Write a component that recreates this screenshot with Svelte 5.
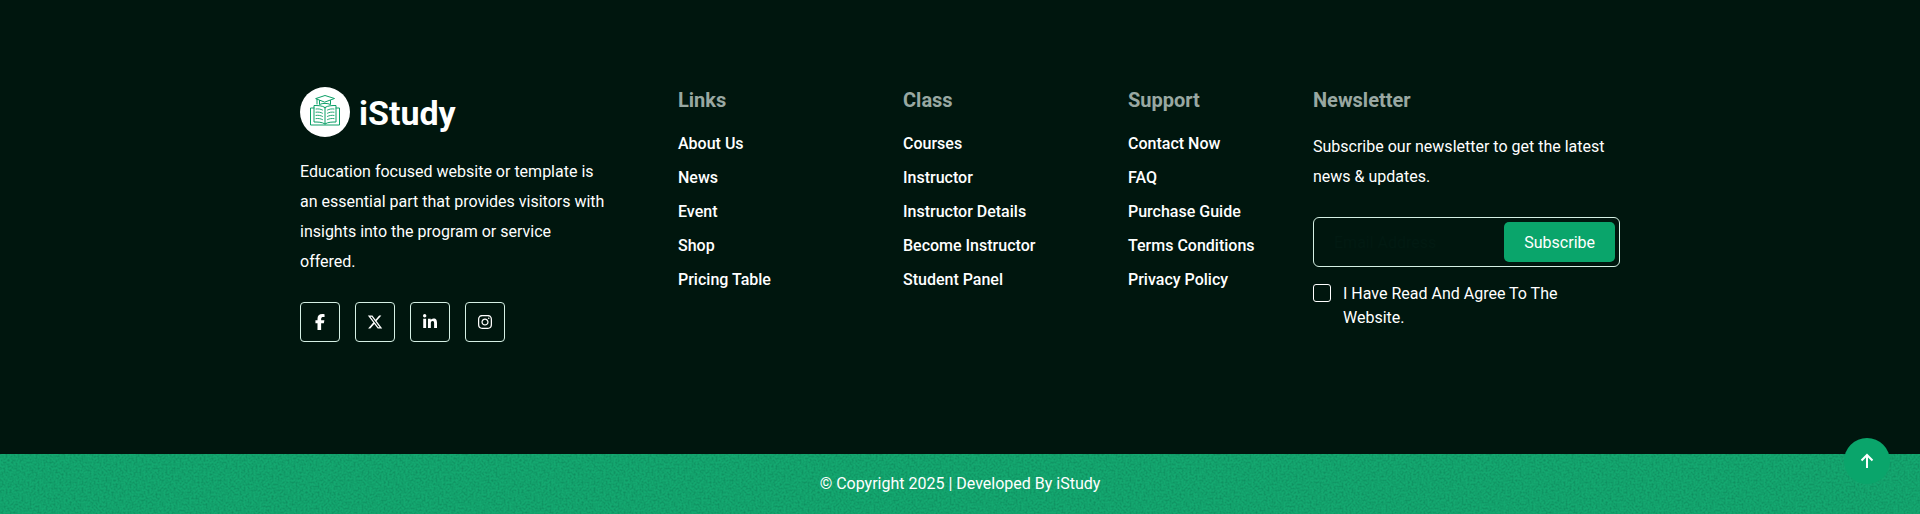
<script>
  const columns = [
    { title: 'Links', items: ['About Us', 'News', 'Event', 'Shop', 'Pricing Table'] },
    { title: 'Class', items: ['Courses', 'Instructor', 'Instructor Details', 'Become Instructor', 'Student Panel'] },
    { title: 'Support', items: ['Contact Now', 'FAQ', 'Purchase Guide', 'Terms Conditions', 'Privacy Policy'] }
  ];

  const socials = [
    {
      name: 'Facebook',
      box: '0 0 320 512',
      path: 'M80 299.3V512H196V299.3h86.500l18-97.800H196V166.900c0-51.700 20.300-71.500 72.700-71.500c16.300 0 29.400 .4 37 1.200V7.900C291.400 4 256.400 0 236.200 0C129.300 0 80 50.500 80 159.400v42.100H14v97.800H80z'
    },
    {
      name: 'X',
      box: '0 0 512 512',
      path: 'M389.200 48h70.600L305.600 224.200 487 464H345L233.700 318.600 106.500 464H35.800L200.700 275.500 26.800 48H172.400L272.900 180.900 389.200 48zM364.400 421.800h39.100L151.100 88h-42L364.400 421.800z'
    },
    {
      name: 'LinkedIn',
      box: '0 0 448 512',
      path: 'M100.300 448H7.400V148.900h92.900zM53.800 108.100C24.100 108.100 0 83.500 0 53.800a53.800 53.800 0 0 1 107.600 0c0 29.700-24.100 54.300-53.800 54.300zM447.900 448h-92.700V302.400c0-34.700-.7-79.200-48.300-79.200-48.300 0-55.700 37.700-55.700 76.700V448h-92.800V148.900h89.100v40.800h1.300c12.400-23.500 42.700-48.300 87.900-48.300 94 0 111.300 61.900 111.300 142.300V448z'
    },
    {
      name: 'Instagram',
      box: '0 0 448 512',
      path: 'M224.100 141c-63.600 0-114.900 51.300-114.900 114.900s51.300 114.900 114.900 114.900S339 319.500 339 255.900 287.700 141 224.100 141zm0 189.600c-41.100 0-74.700-33.500-74.700-74.700s33.500-74.700 74.700-74.700 74.700 33.500 74.700 74.700-33.600 74.700-74.700 74.700zm146.400-194.300c0 14.900-12 26.800-26.800 26.800-14.900 0-26.800-12-26.800-26.800s12-26.800 26.800-26.800 26.800 12 26.800 26.800zm76.100 27.200c-1.700-35.900-9.900-67.700-36.200-93.900-26.200-26.200-58-34.400-93.900-36.200-37-2.100-147.900-2.100-184.900 0-35.800 1.700-67.600 9.900-93.900 36.100s-34.400 58-36.200 93.900c-2.100 37-2.100 147.900 0 184.900 1.700 35.900 9.900 67.700 36.200 93.900s58 34.400 93.900 36.200c37 2.100 147.900 2.100 184.900 0 35.900-1.700 67.700-9.900 93.900-36.200 26.200-26.200 34.400-58 36.200-93.900 2.100-37 2.100-147.800 0-184.800zM398.800 388c-7.800 19.600-22.900 34.700-42.600 42.600-29.500 11.700-99.500 9-132.100 9s-102.700 2.600-132.100-9c-19.600-7.800-34.700-22.900-42.600-42.600-11.700-29.500-9-99.500-9-132.100s-2.600-102.700 9-132.100c7.800-19.600 22.900-34.700 42.600-42.600 29.500-11.700 99.500-9 132.100-9s102.700-2.600 132.100 9c19.600 7.800 34.700 22.900 42.600 42.600 11.700 29.500 9 99.500 9 132.100s2.700 102.700-9 132.100z'
    }
  ];
</script>

<footer>
  <div class="main">
    <div class="container">
      <section class="about">
        <a class="logo" href="#home">
          <svg class="mark" viewBox="0 0 50 50" aria-hidden="true">
            <circle cx="25" cy="25" r="25" fill="#fff" />
            <g fill="none" stroke="#0a9f66" stroke-linejoin="round" stroke-linecap="round">
              <path d="M16 11.500 25 8.500l9.500 3-9.500 3.500z" />
              <path d="M19.500 13.500v4c3-1.500 8-1.500 11 0v-4M17 12v5" />
              <path d="M25 20.500c-3-2-7-2-11-2V35c4 0 8 0 11 2 3-2 7-2 11-2V18.500c-4 0-8 0-11 2zV37" />
              <path d="M14 21h-3.500v17h29V21H36" />
              <path stroke-width="0.900" d="M16 22c2.500-.3 4.500 0 6.500 1M16 25.200c2.500-.3 4.500 0 6.500 1M16 28.400c2.500-.3 4.500 0 6.500 1M16 31.600c2.500-.3 4.500 0 6.500 1M34 22c-2.500-.3-4.500 0-6.500 1M34 25.200c-2.500-.3-4.500 0-6.500 1M34 28.400c-2.500-.3-4.500 0-6.500 1M34 31.600c-2.500-.3-4.500 0-6.500 1" />
            </g>
          </svg>
          <span>iStudy</span>
        </a>
        <p>Education focused website or template is an essential part that provides visitors with insights into the program or service offered.</p>
        <div class="socials">
          {#each socials as social}
            <a href="#social" aria-label={social.name}>
              <svg viewBox={social.box} fill="currentColor" aria-hidden="true"><path d={social.path} /></svg>
            </a>
          {/each}
        </div>
      </section>

      {#each columns as column}
        <nav aria-label={column.title}>
          <h2>{column.title}</h2>
          <ul>
            {#each column.items as item}
              <li><a href="#page">{item}</a></li>
            {/each}
          </ul>
        </nav>
      {/each}

      <section class="newsletter">
        <h2>Newsletter</h2>
        <p>Subscribe our newsletter to get the latest news &amp; updates.</p>
        <form onsubmit={(e) => e.preventDefault()}>
          <div class="field">
            <input type="email" placeholder="Email Address" aria-label="Email Address" />
            <button type="submit">Subscribe</button>
          </div>
          <label class="agree">
            <input type="checkbox" />
            <span>I Have Read And Agree To The Website.</span>
          </label>
        </form>
      </section>
    </div>
  </div>

  <div class="copyright">
    <svg class="grain" aria-hidden="true">
      <filter id="grain" x="0" y="0" width="100%" height="100%" color-interpolation-filters="sRGB">
        <feTurbulence type="fractalNoise" baseFrequency="0.5" numOctaves="4" seed="4" />
        <feColorMatrix values="0 0 0 0 0.04  0 0 0 0 0.48  0 0 0 0 0.32  1.2 0 0 0 -0.45" />
      </filter>
      <rect width="100%" height="100%" filter="url(#grain)" />
    </svg>
    <p>© Copyright 2025 | Developed By iStudy</p>
  </div>
</footer>

<button class="to-top" aria-label="Back to top">
  <svg viewBox="0 0 16 16" aria-hidden="true">
    <path d="M8 15V2M2.500 7.500 8 2l5.500 5.500" fill="none" stroke="currentColor" stroke-width="2" />
  </svg>
</button>

<style>
  :global(body) {
    background: #00160e;
  }

  footer,
  input,
  button {
    font-family: Roboto, "Liberation Sans", sans-serif;
    font-size: 16px;
    color: #fff;
  }

  h2,
  p,
  ul {
    margin: 0;
    padding: 0;
  }

  a {
    color: inherit;
    text-decoration: none;
  }

  .main {
    padding: 87px 24px 112px;
    background: #00160e;
  }

  .container {
    display: grid;
    grid-template-columns: minmax(0, 378fr) minmax(0, 225fr) minmax(0, 225fr) minmax(0, 185fr) minmax(0, 307fr);
    max-width: 1320px;
    margin: 0 auto;
  }

  .about p {
    max-width: 310px;
    margin: 20px 0 25px;
    line-height: 30px;
  }

  .logo {
    display: flex;
    align-items: center;
    gap: 9px;
    height: 50px;
    font-size: 34px;
    font-weight: 700;
  }

  .logo span {
    padding-top: 2px;
  }

  .mark {
    width: 50px;
    height: 50px;
  }

  .socials {
    display: flex;
    gap: 15px;
  }

  .socials a {
    display: grid;
    place-items: center;
    box-sizing: border-box;
    width: 40px;
    height: 40px;
    border: 1px solid #d5f0e4;
    border-radius: 4px;
  }

  .socials svg {
    height: 16px;
  }

  h2 {
    font-size: 20px;
    line-height: 26px;
    font-weight: 700;
    color: #99a8a2;
  }

  ul {
    margin-top: 14px;
    list-style: none;
    font-weight: 500;
    line-height: 34px;
  }

  .newsletter p {
    margin: 19px 0 25px;
    line-height: 30px;
  }

  .field {
    display: flex;
    box-sizing: border-box;
    height: 50px;
    padding: 4px;
    border: 1px solid #d5f0e4;
    border-radius: 6px;
  }

  .field input {
    flex: 1;
    min-width: 0;
    padding: 0 16px;
    border: 0;
    background: transparent;
  }

  .field input::placeholder {
    color: #021a12;
    opacity: 1;
  }

  .field button {
    padding: 0 20px;
    border: 0;
    border-radius: 5px;
    background: #0aa56b;
  }

  .agree {
    display: flex;
    gap: 12px;
    margin-top: 15px;
    max-width: 270px;
    line-height: 24px;
  }

  .agree input {
    appearance: none;
    flex: none;
    box-sizing: border-box;
    width: 18px;
    height: 18px;
    margin: 2px 0 0;
    border: 1px solid #fff;
    border-radius: 3px;
  }

  .copyright {
    position: relative;
    background: #14a870;
    text-align: center;
    line-height: 60px;
  }

  .grain {
    position: absolute;
    inset: 0;
    width: 100%;
    height: 100%;
  }

  .copyright p {
    position: relative;
  }

  .to-top {
    position: fixed;
    right: 30px;
    bottom: 30px;
    display: grid;
    place-items: center;
    width: 46px;
    height: 46px;
    padding: 0;
    border: 0;
    border-radius: 50%;
    background: #0aa56b;
  }

  .to-top svg {
    width: 16px;
    height: 16px;
  }
</style>
